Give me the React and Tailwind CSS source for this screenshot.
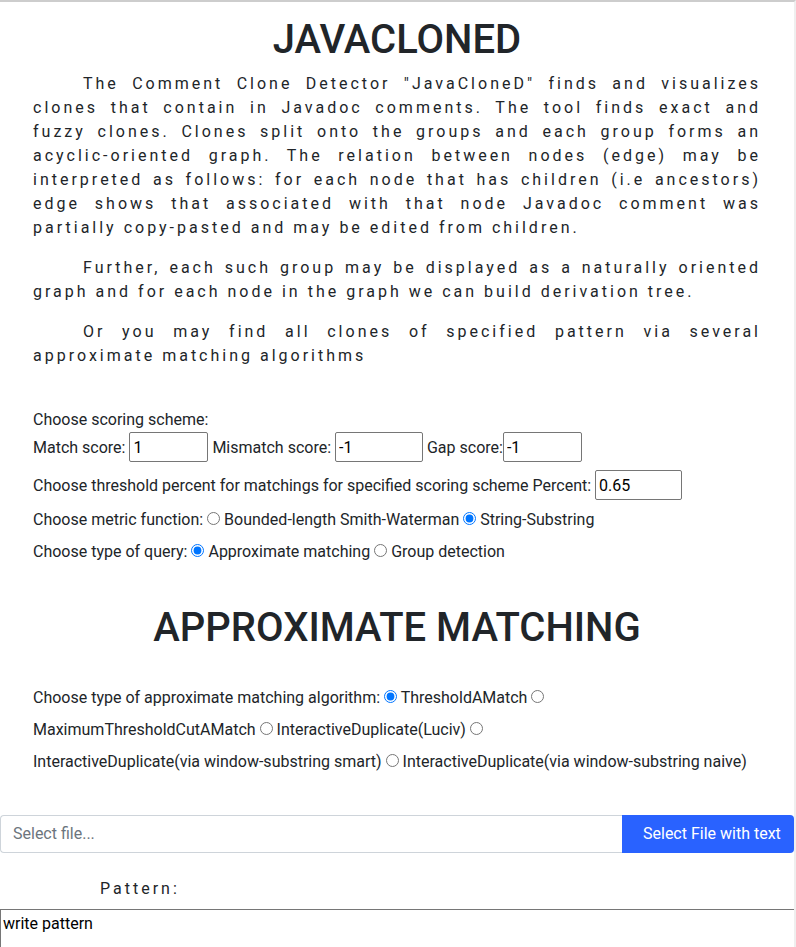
import React from "react";

const Radio = ({ name, checked }) => (
  <input
    type="radio"
    name={name}
    defaultChecked={checked}
    className="m-0 align-baseline"
  />
);

const paragraphs = [
  'The Comment Clone Detector "JavaCloneD" finds and visualizes clones that contain in Javadoc comments. The tool finds exact and fuzzy clones. Clones split onto the groups and each group forms an acyclic-oriented graph. The relation between nodes (edge) may be interpreted as follows: for each node that has children (i.e ancestors) edge shows that associated with that node Javadoc comment was partially copy-pasted and may be edited from children.',
  "Further, each such group may be displayed as a naturally oriented graph and for each node in the graph we can build derivation tree.",
  "Or you may find all clones of specified pattern via several approximate matching algorithms",
];

const algorithms = [
  "ThresholdAMatch",
  "MaximumThresholdCutAMatch",
  "InteractiveDuplicate(Luciv)",
  "InteractiveDuplicate(via window-substring smart)",
  "InteractiveDuplicate(via window-substring naive)",
];

const App = () => {
  return (
    <div className="h-screen overflow-hidden bg-white border-t-2 border-r-2 border-t-[#cdcdcd] border-r-[#efefef] font-['Roboto',sans-serif] text-base leading-6 text-[#212529]">
      <h1 className="mt-[14px] text-center text-[40px] leading-[48px] font-medium">
        JAVACLONED
      </h1>

      <div className="mt-2 px-[33px]">
        {paragraphs.map((text, i) => (
          <p key={i} className="mb-4 indent-[50px] text-justify tracking-[3px]">
            {text}
          </p>
        ))}
      </div>

      <div className="mt-10 px-[33px]">
        <div>Choose scoring scheme:</div>
        <div className="mb-2">
          Match score:{" "}
          <input
            type="text"
            defaultValue="1"
            className="h-[30px] w-[79px] rounded-[2px] border border-[#767676] px-[3px] text-black align-baseline"
          />{" "}
          Mismatch score:{" "}
          <input
            type="text"
            defaultValue="-1"
            className="h-[30px] w-[88px] rounded-[2px] border border-[#767676] px-[3px] text-black align-baseline"
          />{" "}
          Gap score:
          <input
            type="text"
            defaultValue="-1"
            className="h-[30px] w-[79px] rounded-[2px] border border-[#767676] px-[3px] text-black align-baseline"
          />
        </div>
        <div className="mb-2">
          Choose threshold percent for matchings for specified scoring scheme Percent:{" "}
          <input
            type="text"
            defaultValue="0.65"
            className="h-[30px] w-[87px] rounded-[2px] border border-[#767676] px-[3px] text-black align-baseline"
          />
        </div>
        <div className="mb-2">
          Choose metric function: <Radio name="metric" /> Bounded-length Smith-Waterman{" "}
          <Radio name="metric" checked /> String-Substring
        </div>
        <div>
          Choose type of query: <Radio name="query" checked /> Approximate matching{" "}
          <Radio name="query" /> Group detection
        </div>
      </div>

      <h2 className="mt-10 text-center text-[40px] leading-[48px] font-medium">
        APPROXIMATE MATCHING
      </h2>

      <div className="mt-[30px] px-[33px] leading-8">
        Choose type of approximate matching algorithm:{" "}
        {algorithms.map((name, i) => (
          <React.Fragment key={name}>
            <Radio name="algo" checked={i === 0} />{" "}
            <span className="whitespace-nowrap">{name}</span>{" "}
          </React.Fragment>
        ))}
      </div>

      <div className="mt-[37px] flex h-[38px] w-[794px]">
        <div className="flex flex-1 items-center rounded-l-[4px] border border-r-0 border-[#ced4da] px-3 text-[#6c757d]">
          Select file...
        </div>
        <button className="w-[172px] rounded-r-[4px] bg-[#2962ff] pl-[21px] text-left text-white">
          Select File with text
        </button>
      </div>

      <div className="mt-6 ml-[100px] tracking-[3px]">Pattern:</div>

      <textarea
        defaultValue="write pattern"
        className="mt-2 block h-[80px] w-[800px] resize-none border border-[#767676] px-[2px] py-[2px] text-black"
      />
    </div>
  );
};

export default App;
